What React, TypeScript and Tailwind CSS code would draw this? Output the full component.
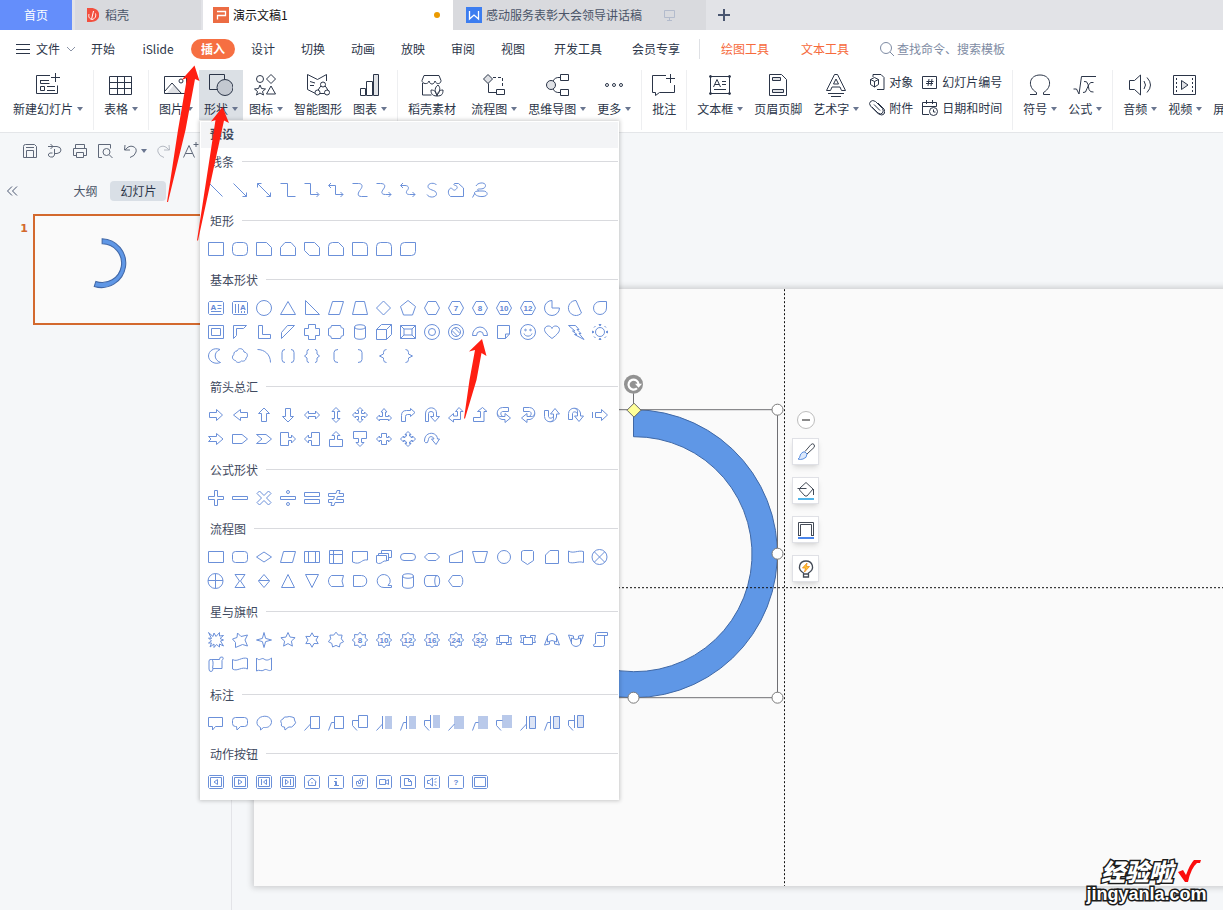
import { useState, type ReactNode } from 'react';
import clsx from 'clsx';

type Shape = {
  d?: string;
  // number or letter set inside the outline
  text?: string;
  textX?: number;
  textY?: number;
  fill?: string;
  solid?: string;
  flip?: string;
};

const FLIP_X = 'matrix(-1 0 0 1 16 0)';

const star = (n: number, outer: number, inner: number, start = -90) => {
  const pts: string[] = [];
  for (let i = 0; i < n * 2; i++) {
    const r = i % 2 ? inner : outer;
    const a = ((start + (i * 180) / n) * Math.PI) / 180;
    pts.push(`${(8 + r * Math.cos(a)).toFixed(1)} ${(8 + r * Math.sin(a)).toFixed(1)}`);
  }
  return `M${pts.join('L')}z`;
};

const circle = (cx: number, cy: number, r: number) =>
  `M${cx - r} ${cy}a${r} ${r} 0 1 0 ${r * 2} 0a${r} ${r} 0 1 0 ${-r * 2} 0z`;

const HEX = 'M4 1.5h8L15.5 8l-3.5 6.5H4L.5 8z';
const RECT = 'M.5 1.5h15v13H.5z';
const BADGE = star(8, 7.8, 5.6);
const CAN = 'M2.5 3c0-3 11-3 11 0v10c0 3-11 3-11 0zM2.5 3c0 3 11 3 11 0';
const BOX = 'M1.5 1.5h13l1 1v11l-1 1h-13l-1-1v-11z';
const INNER = 'M2.5 3.5h11v9h-11z';
const END_R = 'M12.5 10l2.5 2.5-2.5 2.5';
const END_L = 'M3 1L.5 3.5 3 6';
const BAR_1 = 'M6.5 1v13M6.5 9l-6 6.5';
const BAR_2 = 'M6.5 1v13M6.5 7.5h-3l-3 8';
const BAR_3 = 'M6.5 0v13M6.5 5.5h-6v5l4.5 5';
const TURN = 'M12.5.5H6.5C-.5 1-.5 11 6 12.500h3V15.500l5.500-4.500L9 6.500v3H7C4.500 9 4 5 6.500 4.500h6zM1.500 6.500C2 10 4 9.500 7 9.500';

const sections: { title: string; shapes: Shape[] }[] = [
  {
    title: '线条',
    shapes: [
      { d: 'M1.5 1.5l13 13' },
      { d: 'M1.5 1.5l13 13M14.5 10.5v4h-4' },
      { d: 'M1.5 1.5l13 13M14.5 10.5v4h-4M1.5 5.5v-4h4' },
      { d: 'M.5 1.5h7v13h8' },
      { d: `M.5 1.5h6v11h8${END_R}` },
      { d: `M1 3.5h6.5v9H15${END_L}${END_R}` },
      { d: 'M.5 1.5h6c4 0 4.5 3 2 6s-4 7 1 7h6' },
      { d: `M.5 1.5h4c5 0 5 3 3 5.5s-3 5.5 2 5.5H15${END_R}` },
      { d: `M1 3.5h4c4 0 4 3 2.5 4.5s-2 4.5 2 4.5H15${END_L}${END_R}` },
      { d: 'M12.5 3C11 .5 4 .5 4 4.5c0 4 8 3 8.5 7 .5 4-7.5 5-9.5 1' },
      { d: 'M15.5 6v8.5h-13C-.5 12 0 8 2 6.5s3 2.5 5 1.5 3-3 1.5-4S4.5 3 6.5 1.5h4z' },
      { d: 'M4 4c2-4 9.500-4 9.500-.5S9 7 7 7s-2 1.500 0 2h4c5 0 6 5 0 5.500S2 12 2.500 10.500 7 9 7 9M3 11L.5 15.500' },
    ],
  },
  {
    title: '矩形',
    shapes: [
      { d: RECT },
      { d: 'M4.5 1.5h7a4 4 0 0 1 4 4v5a4 4 0 0 1-4 4h-7a4 4 0 0 1-4-4v-5a4 4 0 0 1 4-4z' },
      { d: 'M.5 1.5h10l5 5v8H.5z' },
      { d: 'M5 1.5h6l4.5 5v8H.5v-8z' },
      { d: 'M.5 1.5h10l5 5v8h-10l-5-5z' },
      { d: 'M4.5 1.5h6l5 5v8H.5v-9q0-4 4-4z' },
      { d: 'M.5 1.5h11q4 0 4 4v9H.5z' },
      { d: 'M4.5 1.5h7q4 0 4 4v9H.5v-9q0-4 4-4z' },
      { d: 'M4.5 1.5h11v9q0 4-4 4H.5v-9q0-4 4-4z' },
    ],
  },
  {
    title: '基本形状',
    shapes: [
      { d: `${BOX}M9.5 5.5h4M9.5 8.5h4M3 11.5h10`, text: 'A', textX: 5.5, textY: 9.5 },
      { d: `${BOX}M3.5 4v9M6.5 4v9M9.5 11v2M12.5 11v2`, text: 'A', textX: 11, textY: 9.5 },
      { d: circle(8, 8, 7.5) },
      { d: 'M8 1.5l7.5 13H.5z' },
      { d: 'M1.5.5v14h14z' },
      { d: 'M4.5 1.5h11l-4 13H.5z' },
      { d: 'M3.5 1.5h9l3 13H.5z' },
      { d: 'M7.5 1l7 7-7 7-7-7z' },
      { d: 'M8 .5l7.5 6-3 8.5h-9L.5 6.5z' },
      { d: HEX },
      { d: HEX, text: '7' },
      { d: HEX, text: '8' },
      { d: HEX, text: '10' },
      { d: HEX, text: '12' },
      { d: 'M8 .5a7.5 7.5 0 1 0 7.5 7.5H8z' },
      { d: 'M8 .5A7.5 7.5 0 1 0 13.5 13z' },
      { d: 'M14.5 1.5H8A6.5 6.5 0 1 0 14.5 8z' },
      { d: `${RECT}M3.5 4.5h9v7h-9z` },
      { d: 'M1.5 1.5h13l-3 3h-7v7l-3 3z' },
      { d: 'M2.5 1.5h4v9h8v4h-12z' },
      { d: 'M7.5 1.5h7l-13 13v-6z' },
      { d: 'M4.5.5h7v4h4v7h-4v4h-7v-4h-4v-7h4z' },
      { d: 'M3.5 1.5h9q0 3 3 3v7q-3 0-3 3h-9q0-3-3-3v-7q3 0 3-3z' },
      { d: CAN },
      { d: 'M.5 5.5h10v10H.5zM.5 5.5l5-5h10l-5 5M15.5.5v10l-5 5' },
      { d: `${RECT}M4 5h8v6H4zM.5 1.5L4 5M15.5 1.5L12 5M.5 14.5L4 11M15.5 14.5L12 11` },
      { d: circle(8, 8, 7.5) + circle(8, 8, 3.5) },
      { d: `${circle(8, 8, 7.5)}${circle(8, 8, 4.5)}M4 6.5l5.5 5.5M6.500 4l5.500 5.500` },
      { d: 'M.5 11.5a7.5 8.5 0 0 1 15 0h-4a3.500 4 0 0 0-7 0z' },
      { d: 'M1.5 1.5h12v8.5l-4 4.5h-8zM9.500 14.500v-4.500h4' },
      { d: `${circle(8, 8, 7.5)}${circle(5.5, 6, 0.8)}${circle(10.5, 6, 0.8)}M4 9.5c1 3.5 7 3.5 8 0` },
      { d: 'M8 14.5C2 10 .5 7.5.5 5.5 1 1 7 1 8 4.5c1-3.5 7-3.5 7.5 1 0 2-1.5 4.5-7.5 9z' },
      { d: 'M.5 1.5h7l3.5 4H9l4 4h-2l5 6-9.5-5H9L4.500 7H7z' },
      { d: `${circle(8, 8, 4.5)}M7 .5h2L8 2zM7 15.5h2L8 14zM.5 7v2L2 8zM15.5 7v2L14 8zM2 3.5L3.5 2M12.5 2L14 3.5M2 12.5L3.5 14M12.5 14l1.5-1.5` },
      { d: 'M12 1.500C6-1 .5 3 .5 8s6 9 12 6.500C5.500 12 5.500 4 12 1.500z' },
      { d: 'M5 3c1-3.5 6.5-3 7 1 3.5.5 4.5 4 2 6 0 3-3 3.5-4.5 3-2 2-5 2-6-.5C0 12-.5 8 2 6.5 1.5 4.5 3 3 5 3z' },
      { d: 'M1.5 1.5c7 0 13 5 13 13' },
      { d: 'M5 1.5q-3 0-3 3v7q0 3 3 3M11 1.5q3 0 3 3v7q0 3-3 3' },
      { d: 'M5 1.5q-2 0-2 2V6L.5 8 3 10v2.5q0 2 2 2M11 1.5q2 0 2 2V6l2.5 2-2.5 2v2.5q0 2-2 2' },
      { d: 'M10 1.5q-4 0-4 3v7q0 3 4 3' },
      { d: 'M6 1.5q4 0 4 3v7q0 3-4 3' },
      { d: 'M10.5 1.5q-3 0-3 3V6l-4 2 4 2v1.5q0 3 3 3' },
      { d: 'M5.5 1.5q3 0 3 3V6l4 2-4 2v1.5q0 3-3 3' },
    ],
  },
  {
    title: '箭头总汇',
    shapes: [
      { d: 'M1.5 5.5h7v-3L14.5 8l-6 5.5v-3h-7z' },
      { d: 'M15.5 5.5h-7v-3L1.5 8l7 5.5v-3h7z' },
      { d: 'M5.5 14.5v-8h-3L8 1l5.5 5.5h-3v8z' },
      { d: 'M5.5 1.5v8h-3L8 15l5.5-5.5h-3v-8z' },
      { d: 'M.5 8l4-4v2.5h7V4l4 4-4 4V9.5h-7V12z' },
      { d: 'M8 .5l4 4H9.5v7H12l-4 4-4-4h2.5v-7H4z' },
      { d: 'M8 .5l3 3H9.5v3h3V5l3 3-3 3V9.5h-3v3H11l-3 3-3-3h1.5v-3h-3V11l-3-3 3-3v1.5h3v-3H5z' },
      { d: 'M8 1.5L11 5H9.5v4.5h3V8l3 3-3 3v-1.5h-9V14l-3-3 3-3v1.5h3V5H5z' },
      { d: 'M1.5 14.5v-6q0-5 5-5h4v-2L15 5.5l-4.5 4v-2h-3q-2 0-2 2v5z' },
      { d: 'M1.5 14.5V7C1.5-1 12.500-1 12.500 6v3.500h3l-4.500 5-4.500-5h3V6.500q0-2-2.500-2t-2.500 2v8z' },
      { d: 'M.5 11l5-4.5V9h4V4.5h-2l3.5-4 4 4h-2.500v8h-7V15z' },
      { d: 'M1.5 10.500h7v-6h-3l5-4 4.500 4h-3v10H1.500z' },
      { d: TURN },
      { d: TURN, flip: FLIP_X },
      { d: TURN, flip: 'matrix(0 -1 1 0 0 16)' },
      { d: TURN, flip: 'matrix(0 1 1 0 0 0)' },
      { d: 'M.5 5v6M3.5 5.5h6v-3L15.5 8l-6 5.5v-3h-6z' },
      { d: 'M.5 5.5h8v-3L15 8l-6.5 5.5v-3h-8L3 8z' },
      { d: 'M.5 3.5H10L15.5 8 10 12.5H.5z' },
      { d: 'M.5 3.5H10L15.5 8 10 12.5H.5L6 8z' },
      { d: 'M.5 1.5h8v5h3V4l4 4-4 4V9.5h-3v5h-8z' },
      { d: 'M.5 1.5h8v5h3V4l4 4-4 4V9.5h-3v5h-8z', flip: FLIP_X },
      { d: 'M1.5 15.5v-7h5v-4H4l4-4 4 4H9.5v4h5v7z' },
      { d: 'M1.5.5h13v7h-5v4H12l-4 4-4-4h2.5v-4h-5z' },
      { d: 'M.5 8l3-3v1.5h2v-4h5v4h2V5l3 3-3 3V9.5h-2v4h-5v-4h-2V11z' },
      { d: 'M8 .5l3 3H9.5V5H11v1.5h1.5V5l3 3-3 3V9.5H11V11H9.5v1.5H11l-3 3-3-3h1.5V11H5V9.5H3.5V11l-3-3 3-3v1.5H5V5h1.5V3.5H5z' },
      { d: 'M.5 10.500C0 0 13 0 13.500 8h2L12 13.500 7.500 8H10C9 4.500 4.500 5 4.500 8.500l-1 3q-2 1-3-1z' },
    ],
  },
  {
    title: '公式形状',
    shapes: [
      { d: 'M6.5.5h3v6h6v3h-6v6h-3v-6h-6v-3h6z' },
      { d: 'M.5 6.5h15v3H.5z' },
      { d: 'M3.5 1L8 5.5 12.5 1 15 3.5 10.5 8l4.5 4.5-2.5 2.5L8 10.5 3.5 15 1 12.5 5.5 8 1 3.5z' },
      { d: `M.5 6.5h15v3H.5z${circle(8, 2, 1.5)}${circle(8, 14, 1.5)}` },
      { d: 'M.5 2.5h15v4H.5zM.5 9.5h15v4H.5z' },
      { d: 'M.5 3.5H8l1-3h3l-1 3h4.5v3h-6l-1 3h7v3H7l-1 3H3l1-3H.5v-3h5l1-3h-6z' },
    ],
  },
  {
    title: '流程图',
    shapes: [
      { d: 'M.5 2.5h15v11H.5z' },
      { d: 'M3.5 2.5h9a3 3 0 0 1 3 3v5a3 3 0 0 1-3 3h-9a3 3 0 0 1-3-3v-5a3 3 0 0 1 3-3z' },
      { d: 'M8 3l7.5 5L8 13 .5 8z' },
      { d: 'M3.5 2.5h12l-3 11H.5z' },
      { d: 'M.5 2.5h15v11H.5zM4.5 2.5v11M11.5 2.5v11' },
      { d: 'M1.5 1.5h13v13h-13zM5.5 1.5v13M1.5 5.5h13' },
      { d: 'M.5 2.5h15v8.5c-6-1-6 4-12 3l-3-1z' },
      { d: 'M.5 6.500h10V12c-4-1-4 3-8 2.500l-2-1zM2.500 6.500v-2h10v7h-2M5.500 4.500v-3h10v7h-3' },
      { d: 'M4 4.500h8a3.500 3.500 0 0 1 0 7H4a3.500 3.500 0 0 1 0-7z' },
      { d: 'M4 4.500h8L15.500 8 12 11.500H4L.5 8z' },
      { d: 'M1.5 6.500l13-5v12h-13z' },
      { d: 'M.5 2.500h15l-3 11h-9z' },
      { d: circle(8, 8, 6.5) },
      { d: 'M3.5 1.5h9l1 1v9l-6 4-6-4v-9z' },
      { d: 'M6 1.5h8.5v13h-13V6z' },
      { d: 'M.5 2c5 3 9-1 15 .5v11c-5-2-10 2-15-.5z' },
      { d: `${circle(7.5, 8, 7.5)}M2.5 3l10 10M12.500 3l-10 10` },
      { d: `${circle(7.5, 8, 7.5)}M7.5.5v15M0 7.5h15` },
      { d: 'M3 1.5h10l-4.500 6.500 4.500 6.500H3L7.500 8z' },
      { d: 'M8 1.5l5.500 6.500L8 14.500 2.500 8zM2.500 7.500h11' },
      { d: 'M8 1.5l6.500 13h-13z' },
      { d: 'M8 14.5l6.500-13h-13z' },
      { d: 'M3.5 2.5h12q-3 5.5 0 11h-12c-4-3-4-8 0-11z' },
      { d: 'M1.5 2.5h8c7 0 7 11 0 11h-8z' },
      { d: 'M15.5 14.5H8A6.5 6.5 0 1 1 14 9.5L12 12.5h3.5z' },
      { d: CAN },
      { d: 'M3 2.5h10c3.5 0 3.5 11 0 11H3c-3.5 0-3.5-11 0-11zM13 2.5c-3 0-3 11 0 11' },
      { d: 'M4.5 2.5h8c3 2 3 9 0 11h-8L.5 8z' },
    ],
  },
  {
    title: '星与旗帜',
    shapes: [
      { d: 'M.5.5l4.500 4L6 1l2 3.500L11.500.5V4l4-.5L12 6.500l3.500 1.500-3 1 3 5-4-2v3l-3-2.500L6 15.500V12l-4 3 1.500-4H.5l3-2L.5 6l3 .5z' },
      { d: 'M5.500 1l3.500 3.500 6.500-1.500-2.500 5 2.500 6-5-1.500L3.500 15.500V10.500L.5 7 5 5.500z' },
      { d: star(4, 7.5, 2.2) },
      { d: star(5, 7.5, 3.6) },
      { d: star(6, 7.2, 4) },
      { d: star(7, 7.8, 5.4) },
      { d: BADGE, text: '8' },
      { d: BADGE, text: '10' },
      { d: BADGE, text: '12' },
      { d: BADGE, text: '16' },
      { d: BADGE, text: '24' },
      { d: BADGE, text: '32' },
      { d: 'M3.5 3.5h9v7h-9zM3.5 5.5h-3l1 3-1 4h5v-2M12.5 5.5h3l-1 3 1 4h-5v-2' },
      { d: 'M3.5 5.5h9v7h-9zM3.5 10.5h-3l1-3-1-4h5v2M12.5 10.5h3l-1-3 1-4h-5v2' },
      { d: 'M3.5 4q4.500-5 9 0v6q-4.500-3-9 0zM3.500 5l-3 8 5-1V9.500M12.500 5l3 8-5-1V9.500' },
      { d: 'M3.5 12q4.500 5 9 0V6q-4.500 3-9 0zM3.500 11l-3-8 5 1v2.500M12.500 11l3-8-5 1v2.500' },
      { d: 'M3.5 11.500v-9q0-2 2-2h10v3h-3v9q0 2-2 2H2q-2-2 1.500-3zM5 3.500h8' },
      { d: 'M3.5 3.500h8q0-3 2.500-2.500t0 3.500v8h-9q0 3-2 3t-2-2.500v-8q0-2 2.500-1.500t1 9' },
      { d: 'M.5 3.500c5 3 9-3 15-1v10.500c-6-3-10 3-15 0z' },
      { d: 'M.5 2c3 4 5-1 7.500 1s5 1 7.500-1v12c-3 2-5-2-7.500 0s-5-1-7.500 1z' },
    ],
  },
  {
    title: '标注',
    shapes: [
      { d: 'M.5 2.5h14v9h-7l-3 3.5v-3.500h-4z' },
      { d: 'M3.5 2.5h9q3 0 3 3v3q0 3-3 3h-4L5 15l-.5-3.500h-1q-3 0-3-3v-3q0-3 3-3z' },
      { d: 'M4.500 12.500C-1 10 0 3 6.500 1.500S17 5 15 9s-5 3.500-7.500 3.500L4.500 15z' },
      { d: 'M3 4q1-3 4-2 2-1 5 0 3 0 2.500 3 2.500 3-.5 5-2 3-5 2l-1 .5L5 15l-.5-3q-4 0-3-3.500Q-.5 5 3 4z' },
      { d: 'M6.5 1.5h9v12h-9zM6.5 9l-6 6.5' },
      { d: 'M6.5 1.5h9v12h-9zM6.5 7.5h-3l-3 8' },
      { d: 'M6.5.5h9v12h-9zM6.5 5.5h-6v5l4.5 5' },
      { d: BAR_1, solid: 'M9 1h7v13H9z' },
      { d: BAR_2, solid: 'M9 1h7v13H9z' },
      { d: BAR_3, solid: 'M9 0h7v13H9z' },
      { d: 'M6.5 9l-6 6.5', solid: 'M6 1h10v13H6z' },
      { d: 'M6.5 7.5h-3l-3 8', solid: 'M6 1h10v13H6z' },
      { d: 'M6.5 5.5h-6v5l4.5 5', solid: 'M6 0h10v13H6z' },
      { d: 'M6.5 1v13M6.5 9l-6 6.5M9.500 1.500h6v12h-6z', fill: '#dce4f5' },
      { d: 'M6.5 1v13M6.5 7.5h-3M3.500 7.500l-3 8M9.500 1.500h6v12h-6z', fill: '#dce4f5' },
      { d: 'M6.5 0v13M6.5 5.5h-6M.5 5.5v5M.5 10.5l4.500 5M9.500.5h6v12h-6z', fill: '#dce4f5' },
    ],
  },
  {
    title: '动作按钮',
    shapes: [
      { d: `${BOX}${INNER}M9.5 5.5v5L6 8z` },
      { d: `${BOX}${INNER}M6.5 5.5v5L10 8z` },
      { d: `${BOX}${INNER}M10.5 5.5v5L7.5 8zM5.5 5v6` },
      { d: `${BOX}${INNER}M5.5 5.5v5L8.5 8zM10.5 5v6` },
      { d: `${BOX}M3.5 8L8 4l4.5 4M4.5 7.5v4h7v-4M8 8v1.5` },
      { d: `${BOX}M7 4.5h2M6 7.5h2.5v4M6 11.5h5M7.5 7.5v4` },
      { d: `${BOX}M4.500 7.500v3q0 1.500 2 1.500h2q2 0 2-2V6.500h1.500L9.500 4 7 6.500h1.500v3H6.500v-2z` },
      { d: `${BOX}M3.5 5.5h6v5h-6zM9.5 7.500l3-2v5l-3-2` },
      { d: `${BOX}M4.5 4.5h4l3 3v4h-7zM8.500 4.500v3h3` },
      { d: `${BOX}M3.5 6.5h2L8.500 4v8l-3-2.500h-2zM10.500 5.500l2-1M10.500 8h2M10.500 10.500l2 1` },
      { d: BOX, text: '?' },
      { d: `${BOX}${INNER}` },
    ],
  },
];

function ShapeIcon({ shape }: { shape: Shape }) {
  return (
    <svg className="w-4 h-4 overflow-visible" viewBox="0 0 16 16" aria-hidden="true">
      {shape.solid && <path d={shape.solid} fill="#b9c9ea" />}
      <path d={shape.d} transform={shape.flip} fill={shape.fill ?? 'none'} stroke="#6b90d9" strokeWidth="1" />
      {shape.text && (
        <text
          x={shape.textX ?? 8}
          y={shape.textY ?? 10.5}
          textAnchor="middle"
          className="fill-[#5f86d4] text-[8px] font-bold font-['Liberation_Sans',sans-serif]"
        >
          {shape.text}
        </text>
      )}
    </svg>
  );
}

function Line({ children, size = 24, className = '' }: { children: ReactNode; size?: number; className?: string }) {
  return (
    <svg
      className={clsx('shrink-0', className)}
      width={size}
      height={size}
      viewBox={`0 0 ${size} ${size}`}
      fill="none"
      stroke="currentColor"
      aria-hidden="true"
    >
      {children}
    </svg>
  );
}

const Caret = () => (
  <svg className="w-[6px] h-1 shrink-0" viewBox="0 0 6 4" aria-hidden="true">
    <path d="M0 0h6L3 4z" fill="#6a7690" />
  </svg>
);

function Tool({ label, caret, active, className, children }: {
  label: string; caret?: boolean; active?: boolean; className?: string; children: ReactNode;
}) {
  return (
    <button
      className={clsx(
        'h-[50px] px-[5px] pt-[3px] flex flex-col items-center gap-1 shrink-0',
        active ? 'bg-[#dbe0e5]' : 'hover:bg-gray-100',
        className,
      )}
    >
      <Line>{children}</Line>
      <span className="flex items-center gap-1 h-4 leading-4 whitespace-nowrap">
        {label}
        {caret && <Caret />}
      </span>
    </button>
  );
}

const Divider = () => <div className="w-px h-[60px] mx-1 shrink-0 bg-[#eeeff1]" />;

const menus = ['设计', '切换', '动画', '放映', '审阅', '视图'];

function TitleTabs() {
  return (
    <div className="flex h-[30px] bg-[#e2e3e7] text-[#4a5468] shrink-0">
      <button className="w-[72px] bg-[#648efb] text-white shrink-0">首页</button>
      <button className="w-[126px] ml-[3px] px-3 bg-[#d9dade] flex items-center gap-[6px] shrink-0">
        <svg className="w-3 h-[14px]" viewBox="0 0 12 14" aria-hidden="true">
          <path d="M0 0h4c11 0 11 14 0 14H0z" fill="#f2503f" />
          <path d="M4.500 11.500L6.500 3M4.500 11.500C1.500 10 1.500 8 2 6M5 11.500c4-1 4-4 3.500-6" stroke="#fff" fill="none" />
        </svg>
        稻壳
      </button>
      <button className="w-[250px] ml-[2px] pl-[10px] pr-3 bg-white text-[#111] flex items-center gap-1 shrink-0">
        <svg className="w-4 h-4" viewBox="0 0 16 16" aria-hidden="true">
          <path d="M0 0h16v16H0z" fill="#ec6c43" />
          <path d="M4 4.500h8.500v4H4.500v4" stroke="#fff" strokeWidth="1.300" fill="none" />
        </svg>
        演示文稿1
        <span className="ml-auto mr-px w-[6px] h-[6px] rounded-full bg-[#eb9a00]" />
      </button>
      <button className="w-[253px] pl-[13px] pr-[30px] bg-[#d9dade] flex items-center gap-1 shrink-0">
        <svg className="w-4 h-4" viewBox="0 0 16 16" aria-hidden="true">
          <path d="M0 0h16v16H0z" fill="#3c7df0" />
          <path d="M3.500 4v8L8 8l4.500 4V4" stroke="#fff" strokeWidth="1.300" fill="none" />
        </svg>
        感动服务表彰大会领导讲话稿
        <Line size={12} className="ml-auto text-[#b3bbcc]">
          <path d="M.5 1.500h10v7H.5zM5.500 8.500v2.500M3 11.500h5" />
        </Line>
      </button>
      <button className="w-9 flex items-center justify-center text-[#4a5670]" aria-label="新建">
        <Line size={12}>
          <path d="M6 0v12M0 6h12" strokeWidth="2" />
        </Line>
      </button>
    </div>
  );
}

function MenuBar() {
  return (
    <div className="flex items-center h-[38px] bg-white pl-4 shrink-0">
      <button className="w-[62px] flex items-center gap-[6px] shrink-0">
        <Line size={14}>
          <path d="M0 2.500h14M0 7.500h14M0 11.500h14" />
        </Line>
        <span className="shrink-0">文件</span>
        <Line size={10} className="text-[#8a93a5]">
          <path d="M1 3l4 4 4-4" />
        </Line>
      </button>
      <button className="w-[50px] shrink-0">开始</button>
      <button className="w-[60px] shrink-0">iSlide</button>
      <button className="w-11 h-5 mx-[3px] rounded-full bg-[#f66f42] text-white font-bold leading-5 shrink-0">插入</button>
      {menus.map((name) => (
        <button key={name} className="w-[50px] shrink-0">{name}</button>
      ))}
      <button className="w-20 shrink-0">开发工具</button>
      <button className="w-[76px] shrink-0">会员专享</button>
      <div className="w-px h-5 mx-[5px] bg-[#dfe1e5]" />
      <button className="w-20 shrink-0 text-[#f66a3c]">绘图工具</button>
      <button className="w-20 shrink-0 text-[#f66a3c]">文本工具</button>
      <label className="ml-[15px] flex items-center gap-[3px] text-[#7e8ba3]">
        <Line size={14}>
          <circle cx="6" cy="6" r="5.500" />
          <path d="M10 10l4 4" />
        </Line>
        <input className="w-40 outline-none placeholder:text-[#7e8ba3]" aria-label="搜索" placeholder="查找命令、搜索模板" />
      </label>
    </div>
  );
}

function Ribbon() {
  return (
    <div className="flex h-[65px] pt-[2px] pl-2 gap-px bg-white border-b border-[#e4e6e9] overflow-hidden shrink-0">
      <Tool label="新建幻灯片" caret>
        <path d="M14 2.500H.5v18h21v-8M4 7.500h9M4.500 7.500v3h9M4.500 13.500h4v4h-4zM11 13.500h8M11 17.500h8M19.500 0v9M15 4.500h9" />
      </Tool>
      <Divider />
      <Tool label="表格" caret>
        <path d="M.5 3.500h22v18H.5zM.5 9.500h22M.5 15.500h22M8.500 3.500v18M15.500 3.500v18" />
      </Tool>
      <Divider />
      <Tool label="图片" caret>
        <path d="M3 20l7-8 8 8z" fill="#dfe1e5" stroke="none" />
        <path d="M.5 3.500h22v17H.5zM1 18l7-8 9 10M15 8a2 2 0 1 0 4 0 2 2 0 1 0-4 0" />
      </Tool>
      <Tool label="形状" caret active>
        <path d="M.5 1.500h15v15H.5z" />
        <circle cx="16" cy="14.500" r="8" fill="#c3c8d0" />
      </Tool>
      <Tool label="图标" caret>
        <circle cx="6" cy="6" r="3.500" />
        <path d="M17 1.500L21.500 6 17 10.500 12.500 6zM17 13l4.500 8h-9zM6 12l1.500 3.500 4 .5-3 2.500 1 3.500L6 20l-3.500 2 1-3.500-3-2.500 4-.5z" />
      </Tool>
      <Tool label="智能图形">
        <path d="M20.500 8V1.500l-9 5-10-5v15l8 4M4 8.500l5 1.500M4 12.500h4" />
        <path d="M11 19l3-5q3-4 6 0l3 5M13 20.500h8" />
        <circle cx="11.500" cy="19.500" r="2.500" fill="#fff" />
        <circle cx="21" cy="19.500" r="2.500" fill="#fff" />
        <circle cx="17" cy="11.500" r="2.500" fill="#fff" />
      </Tool>
      <Tool label="图表" caret>
        <path d="M2.500 15.500h5v7h-5zM8.500 8.500h6v14h-6z" />
        <path d="M15.500 1.500h5v21h-5z" fill="#e0e2e6" />
      </Tool>
      <Divider />
      <Tool label="稻壳素材">
        <path d="M2.500 10v12h9M4 2.500h15l2 5c0 4-5 4-6 .5-1 4-5 4-6 0-1 4-7 3-7-.5z" />
        <path d="M17 23c-6 0-6-4-6-6 4 0 5 2 6 6 5 0 6-2 6-6-4 0-5 2-6 6zM17 22c-3-4-2-8 1-10 3 3 2 7-1 10z" fill="#fff" />
      </Tool>
      <Tool label="流程图" caret className="ml-1">
        <path d="M6 1.500L10.500 6 6 10.500 1.500 6z" fill="#dfe1e5" />
        <path d="M6.500 10.500v9h8M14.500 16.500h8v5h-8z" />
        <path d="M11 4.500h9.500v10" strokeDasharray="3 2" />
      </Tool>
      <Tool label="思维导图" caret>
        <circle cx="6" cy="12" r="4.500" fill="#dfe1e5" />
        <path d="M15.500 1.500h8v6h-8zM15.500 16.500h8v6h-8zM8 8q2-4 7-3.500M8 16q2 4 7 3.500" />
      </Tool>
      <Tool label="更多" caret>
        <circle cx="5" cy="12" r="1.500" />
        <circle cx="12" cy="12" r="1.500" />
        <circle cx="19" cy="12" r="1.500" />
      </Tool>
      <Divider />
      <Tool label="批注">
        <path d="M14 2.500H.5v17h3v3l4-3h15V12M18.500 1v9M14 5.500h9" />
      </Tool>
      <Divider />
      <Tool label="文本框" caret>
        <path d="M2.500 3.500h19v17h-19zM14 8.500h4M14 11.500h4M6 16.500h12M5.500 14L9 6.500l3.500 7.500M7 11.500h4" />
        <circle cx="2.500" cy="3.500" r="1" fill="#2b3548" />
        <circle cx="21.500" cy="3.500" r="1" fill="#2b3548" />
        <circle cx="2.500" cy="20.500" r="1" fill="#2b3548" />
        <circle cx="21.500" cy="20.500" r="1" fill="#2b3548" />
      </Tool>
      <Tool label="页眉页脚">
        <path d="M3.500 1.500h12l5 5v16h-17z" />
        <path d="M6.500 4.500h8v3h-8zM6.500 16.500h11v3h-11z" fill="#e0e2e6" />
      </Tool>
      <Tool label="艺术字" caret>
        <path d="M2.500 17.500l8-16h3l8 16h-4l-1.500-3.500H8l-1.500 3.500zM9.500 11h5L12 6zM4 20.500h16M7 23.500h10" />
      </Tool>
      <div className="pl-1 pt-[3px] pr-1 mr-px grid grid-cols-[auto_auto] gap-x-[9px] content-start shrink-0">
        <button className="flex items-center gap-1 h-[18px] mb-2 whitespace-nowrap">
          <Line size={16}>
            <path d="M4 3V.5h8l3 3v12H8" />
            <path d="M5.500 3.500l4 2v5l-4 2.500-4-2.500v-5zM1.500 5.500l4 2 4-2M5.500 7.500V13" />
          </Line>
          对象
        </button>
        <button className="flex items-center gap-1 h-[18px] mb-2 whitespace-nowrap">
          <Line size={16}>
            <path d="M.5 2.500h14v12H.5zM7 5l-1 7M10 5l-1 7M4.500 7.500h7M4 9.500h7" />
          </Line>
          幻灯片编号
        </button>
        <button className="flex items-center gap-1 h-[18px] whitespace-nowrap">
          <Line size={16}>
            <path d="M3 7l6 6q3 2 4.500 0t0-4.500l-7-7q-3-2-5 0t0 4.500l8 8q4 2 5.500 0t0-5l-6-6M5 4.500l6 6" />
          </Line>
          附件
        </button>
        <button className="flex items-center gap-1 h-[18px] whitespace-nowrap">
          <Line size={16}>
            <path d="M7 14.500H.5v-12h14v4M.5 6.500h14M4.500 0v4M10.500 0v4" />
            <circle cx="11.500" cy="11.500" r="4" />
            <path d="M11.500 9.500v2.500h2" />
          </Line>
          日期和时间
        </button>
      </div>
      <Divider />
      <Tool label="符号" caret>
        <path d="M2 21.500h6.500v-2C-1 14 1 2 12 2s13 12 3.500 17.500v2H22" />
      </Tool>
      <Tool label="公式" caret>
        <path d="M.5 16h3L6 21 8.500 3.500H23M10 19.500q3 1 4-4l2-4q1-3 4.500-2M11 8.500q3-1 4 3l1 5q1 3 4.500 2.500" />
      </Tool>
      <Divider />
      <Tool label="音频" caret>
        <path d="M1.500 7.500h5l6-5.500v20l-6-5.500h-5zM16 8q3 4 0 8M19 4.500q7 7.500 0 15" />
      </Tool>
      <Tool label="视频" caret>
        <path d="M.5 2.500h22v19H.5z" />
        <path d="M3.500 5v14M19.500 5v14" strokeDasharray="2 2" />
        <path d="M8.500 7.500v9L15 12z" fill="#e0e2e6" />
      </Tool>
      <Tool label="屏幕录制" caret>
        <path d="M2.500 3.500h19v14h-19zM8 21.500h8" />
      </Tool>
    </div>
  );
}

function QuickTools() {
  return (
    <div className="flex items-center h-9 pl-[22px] gap-[9px] text-[#5f6879] shrink-0">
      <button aria-label="保存">
        <Line size={16}><path d="M1.500 3.500q0-2 2-2h9l2 2v11h-13zM4.500 14.500v-7h7v7M4 4.500h8" /></Line>
      </button>
      <button aria-label="输出为PDF">
        <Line size={16}><path d="M1 3.500h9q4 .5 4 3.500t-4 3.500H7M3.500 1L6 3.500 3.500 6M7.500 6v6q-1 3-4 2t-2-3q1-1.500 4-1" /></Line>
      </button>
      <button aria-label="打印">
        <Line size={16}><path d="M3.500 5.500v-4h9v4M4 12.500H1.500v-7h13v7H12M4.500 9.500h7v5h-7z" /></Line>
      </button>
      <button aria-label="打印预览">
        <Line size={16}><path d="M5 14.500H1.500v-13h12v4M12.500 12l3 3" /><circle cx="9.500" cy="9" r="3.500" /></Line>
      </button>
      <button className="flex items-center gap-[3px] w-[25px]" aria-label="撤销">
        <Line size={16}><path d="M3 2L2.500 7H8M3 7q4-5 8-3.500t3 5.500-6 5.500" /></Line>
        <Caret />
      </button>
      <button className="text-[#b4b9c2]" aria-label="恢复">
        <Line size={16}><path d="M13 2l.5 5H8M13 7Q9 2 5 3.500T2 9t6 5.500" /></Line>
      </button>
      <button aria-label="增大字号">
        <Line size={20}><path d="M2.500 16.500L8 4.500l5.500 12M4.500 12.500h7M12.500 3.500h5M15 1v5" /></Line>
      </button>
    </div>
  );
}

function OutlinePane() {
  return (
    <aside className="w-[232px] shrink-0 border-r border-[#e3e4e8]">
      <div className="flex items-center h-[42px] pl-[6px]">
        <button className="w-[54px] text-[#4a5670]" aria-label="收起">
          <Line size={12}><path d="M6 1.500L1.500 6 6 10.500M11 1.500L6.500 6 11 10.500" /></Line>
        </button>
        <button className="w-[50px] pl-px text-[#4a5468]">大纲</button>
        <button className="w-14 h-5 pl-px rounded-sm bg-[#d9dfe6] leading-5">幻灯片</button>
      </div>
      <div className="flex pt-[2px]">
        <span className="w-[33px] pt-2 pr-[5px] text-right text-[11px] font-bold text-[#d3692e] font-['DejaVu_Sans',sans-serif]">1</span>
        <button className="w-[196px] h-[111px] border-2 border-[#d3692e] bg-[#fafafa]" aria-label="幻灯片 1">
          <svg className="w-full h-full" viewBox="0 0 1062 597" aria-hidden="true">
            <path
              d="M370 127A136 136 0 1 1 326 393L335 365A108 108 0 1 0 370 155z"
              fill="#5f97e6"
              stroke="#4168a8"
              strokeWidth="6"
            />
          </svg>
        </button>
      </div>
    </aside>
  );
}

const handles = [[379.5, 408.5], [523.5, 408.5], [523.5, 264.5], [523.5, 120.5]];

function Slide() {
  return (
    <div className="relative w-[1062px] aspect-video shrink-0 bg-[#fafafa] shadow-[0_0_6px_2px_rgba(0,0,0,0.16)]">
      <svg className="w-full h-full" viewBox="0 0 1062 597">
        <path
          d="M379.5 120.5A144 144 0 1 1 333.5 401L342 376A117.500 117.500 0 1 0 379.500 147.500z"
          fill="#5f97e6"
          stroke="#3f68a6"
        />
        <path d="M530.5 0v597M0 298.5h1062" stroke="#111" strokeDasharray="2 2" />
        <path d="M235.5 120.5h288v288h-288zM379.5 104v16" fill="none" stroke="#6f6f73" />
        {handles.map(([x, y]) => (
          <circle key={`${x}-${y}`} cx={x} cy={y} r="5.500" fill="#fff" stroke="#7b7b7b" />
        ))}
        <path d="M380 114l7 7-7 7-7-7z" fill="#ffff99" stroke="#666" />
        <circle cx="379.500" cy="95" r="9.500" fill="#929292" />
        <path d="M383 99a5 5 0 1 1 1.500-4" fill="none" stroke="#fff" strokeWidth="2.200" />
        <path d="M381 94.500h7l-3.500 4z" fill="#fff" />
      </svg>
      {/* quick actions beside the selected shape */}
      <div className="absolute left-[538px] top-[122px] flex flex-col items-center gap-3 text-[#444b57]">
        <button className="w-[18px] h-[18px] -mb-[3px] rounded-full border border-[#bdbdbd] bg-white flex items-center justify-center" aria-label="收起">
          <span className="w-2 h-[2px] bg-[#8b8b8b]" />
        </button>
        <button className="w-[27px] h-[27px] bg-white border border-[#e0e1e6] shadow-md flex items-center justify-center" aria-label="样式">
          <Line size={20}>
            <path d="M9 9.500l6-7q2-1.500 3 0t0 3L11 12" />
            <path d="M7 10q2-1 4 2 0 4-4 5-3 1-5 0 2-1 2-3t3-4z" fill="#dce8fb" stroke="#5a8fe0" />
          </Line>
        </button>
        <button className="w-[27px] h-[27px] bg-white border border-[#e0e1e6] shadow-md flex items-center justify-center" aria-label="填充">
          <Line size={20}>
            <path d="M1.500 7.500h9M4 7l6-5.500 7 6.500-6 7H9L3.500 9zM17.500 8v6" />
            <path d="M2 18h16" stroke="#4fb3e8" strokeWidth="2" />
          </Line>
        </button>
        <button className="w-[27px] h-[27px] bg-white border border-[#e0e1e6] shadow-md flex items-center justify-center" aria-label="轮廓">
          <Line size={20}>
            <path d="M2.500 15V2.500h15V15M4.500 15V4.500h11V15M2 15.500h3M15 15.500h3" />
            <path d="M2 18h16" stroke="#4a85ea" strokeWidth="2" />
          </Line>
        </button>
        <button className="w-[27px] h-[27px] bg-white border border-[#e0e1e6] shadow-md flex items-center justify-center" aria-label="智能设计">
          <Line size={20}>
            <path d="M7.500 15v-1c-7-4-4-12 2.500-12s9.500 8 2.500 12v1zM7.500 15v3h5v-3" strokeWidth="1.300" />
            <path d="M11 4L6.500 9h3l-1 4 5-5.500h-3z" fill="#ffc531" stroke="#ed8b1c" strokeWidth=".8" />
          </Line>
        </button>
      </div>
    </div>
  );
}

function ShapeGallery() {
  return (
    <div className="absolute left-[200px] top-[121px] w-[419px] bg-white border border-white shadow-[0_0_4px_1px_rgba(0,0,0,0.2)]">
      <h2 className="h-[26px] pl-[9px] leading-6 font-bold bg-[#f3f4f6] text-[#3f4a60]">预设</h2>
      {sections.map((section) => (
        <section key={section.title} className="pb-[5px]">
          <h3 className="flex items-center gap-2 h-7 mb-[2px] pl-[9px] text-[#3f4a60]">
            {section.title}
            <span className="flex-1 h-px mb-[2px] bg-[#d9dade]" />
          </h3>
          <div className="flex flex-wrap pl-[3px] pr-[5px]">
            {section.shapes.map((shape, i) => (
              <button key={i} className="w-6 h-6 flex items-center justify-center hover:bg-blue-50" aria-label={`${section.title} ${i + 1}`}>
                <ShapeIcon shape={shape} />
              </button>
            ))}
          </div>
        </section>
      ))}
    </div>
  );
}

function Pointers() {
  return (
    <svg className="absolute left-0 top-0 w-[500px] h-[430px] pointer-events-none" viewBox="0 0 500 430" aria-hidden="true">
      <g fill="#ff1f12">
        <path d="M194.500 65.500L199.500 81l-4.500-2-9.500 51-17.500 72h-1l11-72 9-52-5.500 2z" />
        <path d="M222.500 107L229 123l-5-2.500-26 120h-1L215.500 120l-4.500 1.500z" />
        <path d="M482 339l4.500 17-5-3-5 27-11.500 38.500h-1L469.500 380l5.500-30-6 1.500z" />
      </g>
    </svg>
  );
}

function Watermark() {
  return (
    <div className="absolute right-[15px] bottom-[6px] w-[123px] text-white [paint-order:stroke_fill] [-webkit-text-stroke:3px_#1b1b1b]">
      <div className="flex items-center pl-4 gap-1">
        <span className="text-2xl leading-[26px] font-black italic whitespace-nowrap">经验啦</span>
        <svg className="w-6 h-6 shrink-0" viewBox="0 0 24 24" stroke="none" aria-hidden="true">
          <path d="M1 13l5-2 3 5Q13 5 17 1h7l-1 3h-3Q14 9 11 23H8z" fill="#fb0d0d" />
        </svg>
      </div>
      <div className="text-lg leading-5 font-bold text-center whitespace-nowrap font-['Liberation_Sans',sans-serif]">jingyanla.com</div>
    </div>
  );
}

export default function App() {
  const [galleryOpen] = useState(true);

  return (
    <div className="relative min-h-screen overflow-hidden flex flex-col bg-[#f5f7f9] text-xs text-[#2b3548] font-['Noto_Sans_CJK_SC',sans-serif]">
      <TitleTabs />
      <MenuBar />
      <Ribbon />
      <QuickTools />
      <main className="flex flex-1 pt-px">
        <OutlinePane />
        <div className="flex-1 min-w-0 overflow-hidden pl-[22px] pt-[119px] pb-6">
          <Slide />
        </div>
      </main>
      {galleryOpen && <ShapeGallery />}
      <Pointers />
      <Watermark />
    </div>
  );
}
